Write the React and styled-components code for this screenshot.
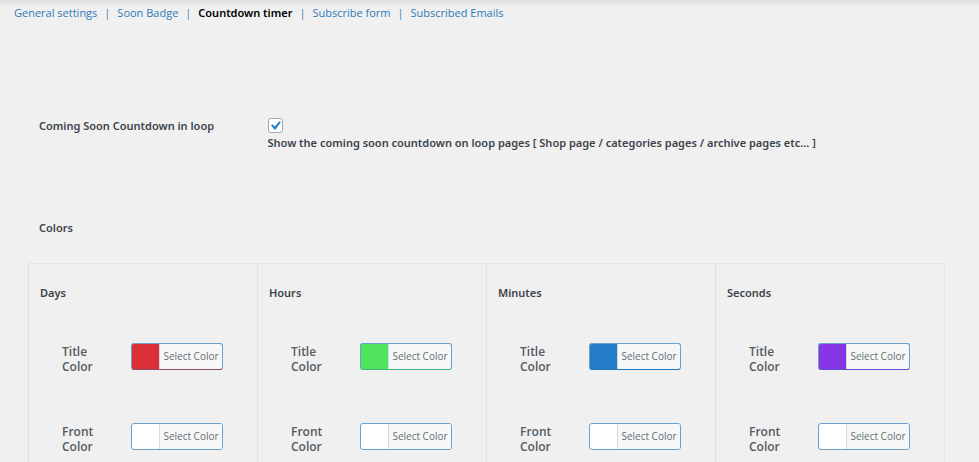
import { useState } from "react";
import styled, { createGlobalStyle } from "styled-components";

const tabs = [
  "General settings",
  "Soon Badge",
  "Countdown timer",
  "Subscribe form",
  "Subscribed Emails",
];

const columns = [
  { name: "Days", title: "#dc3038", front: "#ffffff" },
  { name: "Hours", title: "#50e35c", front: "#ffffff" },
  { name: "Minutes", title: "#227cc6", front: "#ffffff" },
  { name: "Seconds", title: "#8835e6", front: "#ffffff" },
];

const headingFont = '"Segoe UI", "Noto Sans", sans-serif';

const ColorField = ({ id, label, color }) => (
  <Field>
    <FieldLabel htmlFor={id}>{label}</FieldLabel>
    <ColorButton id={id} type="button" $color={color}>
      <span>Select Color</span>
    </ColorButton>
  </Field>
);

const App = () => {
  const [active, setActive] = useState("Countdown timer");
  const [inLoop, setInLoop] = useState(true);

  return (
    <Page>
      <GlobalStyle />
      <Tabs>
        {tabs.map((tab) => (
          <Tab key={tab}>
            <TabLink
              href="#"
              $active={tab === active}
              onClick={(e) => {
                e.preventDefault();
                setActive(tab);
              }}
            >
              {tab}
            </TabLink>
          </Tab>
        ))}
      </Tabs>

      <Settings>
        <SettingRow>
          <SettingTitle>Coming Soon Countdown in loop</SettingTitle>
          <CheckLabel>
            <Checkbox
              type="checkbox"
              checked={inLoop}
              onChange={(e) => setInLoop(e.target.checked)}
            />
            <CheckMark viewBox="0 0 20 20" aria-hidden="true">
              <path d="M15.2 4.2l1.9 1.4-7 9.8H8.3L4 9.8l2-1.6 3.1 3z" />
            </CheckMark>
            <CheckText>
              Show the coming soon countdown on loop pages [ Shop page /
              categories pages / archive pages etc... ]
            </CheckText>
          </CheckLabel>
        </SettingRow>

        <SectionTitle>Colors</SectionTitle>

        <Panel>
          {columns.map((column) => (
            <Column key={column.name}>
              <ColumnTitle>{column.name}</ColumnTitle>
              <ColorField
                id={`${column.name}-title`}
                label="Title Color"
                color={column.title}
              />
              <ColorField
                id={`${column.name}-front`}
                label="Front Color"
                color={column.front}
              />
            </Column>
          ))}
        </Panel>
      </Settings>
    </Page>
  );
};

const GlobalStyle = createGlobalStyle`
  * {
    box-sizing: border-box;
  }

  body {
    margin: 0;
    background: #f0f0f0;
    color: #3c434a;
    font-family: "Segoe UI", "Open Sans", sans-serif;
    font-size: 11px;
    line-height: 16px;
  }
`;

const Page = styled.div`
  min-height: 100vh;
  display: flex;
  flex-direction: column;
  background: linear-gradient(#dfe0e2, #f0f0f0 8px);
`;

const Tabs = styled.ul`
  display: flex;
  margin: 0;
  padding: 5px 14px 6px;
  list-style: none;
`;

const Tab = styled.li`
  & + &::before {
    content: "|";
    display: inline-block;
    width: 20px;
    text-align: center;
    color: #3b82b8;
  }
`;

const TabLink = styled.a`
  color: ${({ $active }) => ($active ? "#000" : "#2f7ab5")};
  font-family: ${({ $active }) => ($active ? headingFont : "inherit")};
  font-weight: ${({ $active }) => ($active ? 600 : 400)};
  text-decoration: none;
`;

const Settings = styled.main`
  flex: 1;
  display: flex;
  flex-direction: column;
  padding: 91px 34px 0 28px;
`;

const SettingRow = styled.div`
  display: grid;
  grid-template-columns: 1fr 3fr;
  padding-left: 11px;
  font-family: ${headingFont};
  font-weight: 600;
`;

const SettingTitle = styled.div`
  line-height: 16px;
`;

const CheckLabel = styled.label`
  display: grid;
  grid-template-columns: 1fr;
  margin-left: 2px;
`;

const Checkbox = styled.input`
  grid-area: 1 / 1;
  appearance: none;
  width: 15px;
  height: 15px;
  margin: 0;
  border: 1px solid #a4a6a8;
  border-radius: 3px;
  background: #fff;
`;

const CheckMark = styled.svg`
  grid-area: 1 / 1;
  width: 15px;
  height: 15px;
  fill: #2580c8;
  pointer-events: none;
  visibility: hidden;

  ${Checkbox}:checked + & {
    visibility: visible;
  }
`;

const CheckText = styled.span`
  margin-top: 2px;
`;

const SectionTitle = styled.h2`
  margin: 69px 0 27px 11px;
  font-family: ${headingFont};
  font-size: 11px;
  font-weight: 600;
`;

const Panel = styled.div`
  flex: 1;
  display: grid;
  grid-template-columns: repeat(4, 1fr);
  border-top: 1px solid #e1e4e8;
  border-right: 1px solid #e1e4e8;
`;

const Column = styled.section`
  padding: 21px 11px 0;
  border-left: 1px solid #dde1e7;
`;

const ColumnTitle = styled.h3`
  margin: 0 0 42px;
  font-family: ${headingFont};
  font-size: 11px;
  font-weight: 600;
`;

const Field = styled.div`
  display: flex;
  align-items: flex-start;
  padding-left: 22px;

  & + & {
    margin-top: 49px;
  }
`;

const FieldLabel = styled.label`
  width: 40px;
  margin-right: 29px;
  padding-top: 1px;
  font-size: 12px;
  font-weight: 600;
  line-height: 15px;
  color: #555b61;
`;

const ColorButton = styled.button`
  display: flex;
  flex-shrink: 0;
  width: 92px;
  height: 27px;
  padding: 0 0 0 27px;
  border: 1px solid #6aa0cb;
  border-radius: 3px;
  background: ${({ $color }) => $color};
  font-family: inherit;
  font-size: 10px;
  line-height: 25px;
  color: #666c71;
  cursor: pointer;

  ${({ $color }) =>
    $color !== "#ffffff" &&
    `border-bottom-color: color-mix(in srgb, ${$color} 60%, #2271b1);`}

  span {
    flex: 1;
    border-left: 1px solid #d5d9dc;
    border-radius: 0 2px 2px 0;
    background: #f6f8f8;
    text-align: center;
  }
`;

export default App;
